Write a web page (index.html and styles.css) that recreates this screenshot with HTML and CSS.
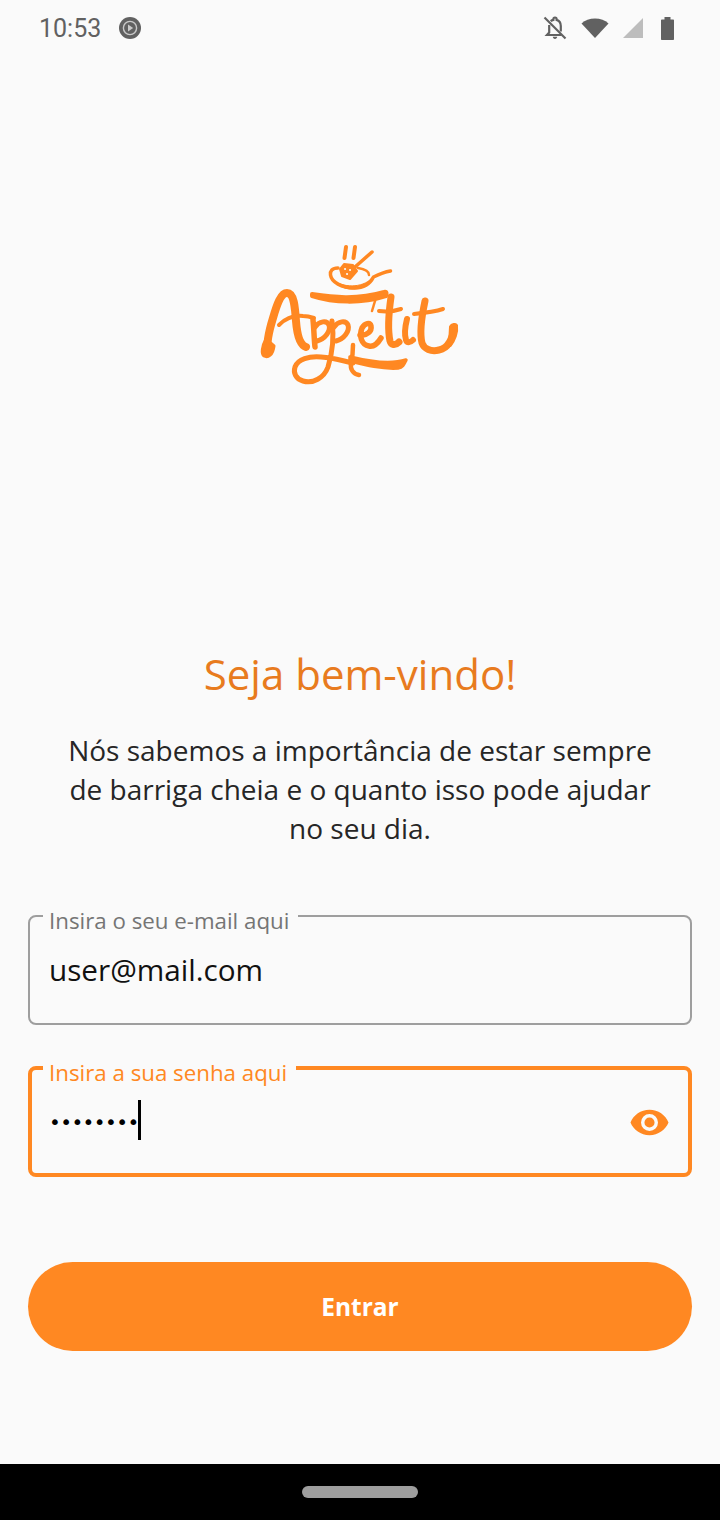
FILE: index.html
```html
<!DOCTYPE html>
<html lang="pt-BR">
<head>
    <meta charset="UTF-8">
    <meta name="viewport" content="width=device-width, initial-scale=1.0">
    <title>Appetit - Login</title>
    <link rel="stylesheet" href="styles.css">
</head>
<body>
    <div class="phone">
        <div class="status-bar">
            <div class="status-left">
                <span class="clock">10:53</span>
                <svg class="play-icon" width="22" height="22" viewBox="0 0 22 22">
                    <circle cx="11" cy="11" r="11" fill="#616161"/>
                    <circle cx="11" cy="11" r="6.6" fill="none" stroke="#c9c9c9" stroke-width="1.4"/>
                    <path d="M9 7.6v6.8l5.2-3.4z" fill="#c9c9c9"/>
                </svg>
            </div>
            <div class="status-right">
                <svg class="bell-icon" width="24" height="26" viewBox="0 0 24 26">
                    <path d="M17.800 16.500V11c0-3-1.900-5.400-4.200-6.100v-.8c0-.9-.7-1.600-1.600-1.600s-1.600.7-1.600 1.600v.8C9 5.200 8.300 5.600 7.700 6.100" fill="none" stroke="#616161" stroke-width="2.200"/>
                    <path d="M6.200 10v7.600L4 20h14.500" fill="none" stroke="#616161" stroke-width="2.200"/>
                    <path d="M9.800 21.800h4.400c0 1.200-1 2.200-2.200 2.200s-2.200-1-2.200-2.200z" fill="#616161"/>
                    <path d="M1.500 2.500l21 21" stroke="#616161" stroke-width="2.200"/>
                </svg>
                <svg class="wifi-icon" width="28" height="20" viewBox="0 0 28 20">
                    <path d="M0.500 5.500C4 2.300 8.700 0.500 14 0.500s10 1.800 13.500 5L14 20z" fill="#616161"/>
                </svg>
                <svg class="signal-icon" width="20" height="20" viewBox="0 0 20 20">
                    <path d="M0 20L20 0v20z" fill="#bdbdbd"/>
                </svg>
                <svg class="battery-icon" width="13" height="23" viewBox="0 0 13 23">
                    <path d="M3.500 0h6v2.500H12c.6 0 1 .4 1 1V22c0 .6-.4 1-1 1H1c-.6 0-1-.4-1-1V3.500c0-.6.4-1 1-1h2.500z" fill="#616161"/>
                </svg>
            </div>
        </div>

        <main class="content">
            <div class="logo">
                <svg width="220" height="160" viewBox="0 0 220 160" fill="none" stroke="#ff8822" stroke-linecap="round" stroke-linejoin="round" role="img" aria-label="Appetit">
                    <!-- steam and spatula -->
                    <path d="M96 12l-1.500 11M105 12l-1.500 11" stroke-width="4"/>
                    <path d="M122 17l-17 15" stroke-width="3.500"/>
                    <path d="M94 29l9 1 4 6-7 8-8-3-2-7z" fill="#ff8822" stroke-width="2"/>
                    <path d="M95 34h.1M100 35h.1M97 39h.1" stroke="#fafafa" stroke-width="2"/>
                    <!-- pan -->
                    <path d="M88 33c-6 0-8 3-7.500 7 1 7 11 13 24 13 10 0 16-5 19-11 6-3 11-5 17-6" stroke-width="3.500"/>
                    <path d="M84 46c8 6 28 8 38-3-4 9-13 11-20 11-7 0-14-3-18-8z" fill="#ff8822" stroke-width="1"/>
                    <path d="M108 33c7 1 11 3 11 7" stroke-width="2.500"/>
                    <!-- bar under the pan -->
                    <path d="M62 59c20 3 45 6 72-2 3-1 3 2 2 4-25 8-52 7-74 0z" fill="#ff8822" stroke-width="4"/>
                    <!-- A -->
                    <path d="M18 116c-2-8 1-20 5-33 4-14 8-25 14-25 7 0 8 14 9 28 1 13 4 24 10 26" stroke-width="8"/>
                    <path d="M16 104c-4 7-5 15-2 17 4 2 9-1 10-10z" fill="#ff8822" stroke-width="3"/>
                    <path d="M29 90c6-6 14-10 24-9 5 0 8 1 11 2" stroke-width="4"/>
                    <!-- p p with descenders -->
                    <path d="M63 85c1 9 1 18 2 27" stroke-width="5.500"/>
                    <path d="M65 92c4-6 12-7 14-2 2 6-4 14-12 16" stroke-width="5"/>
                    <path d="M82 86c2 15 1 30-4 46-4 11-15 17-25 14-7-2-10-8-8-14 3-8 14-11 26-10 14 1 22 4 32 6" stroke-width="5"/>
                    <path d="M84 92c4-6 12-7 14-2 2 6-4 14-12 16" stroke-width="5"/>
                    <path d="M103 110c0 8-1 14-2 18-1 6 2 11 8 12" stroke-width="4.500"/>
                    <!-- swash -->
                    <path d="M100 126c16 4 32 8 48 7 5-1 6-4 8-8-12 4-32 3-56-3z" fill="#ff8822" stroke-width="3.500"/>
                    <!-- e -->
                    <path d="M110 100c7 1 12-4 11-9-1-4-6-3-9 2-3 7-1 17 7 18 5 1 9-3 12-8" stroke-width="5.500"/>
                    <path d="M125 66l-3 10" stroke-width="2.500"/>
                    <!-- t i t -->
                    <path d="M141 62c-2 14-4 30-1 44 1 4 5 5 9 1" stroke-width="7"/>
                    <path d="M129 76c8 1 16 0 22-2" stroke-width="4"/>
                    <path d="M157 84c-2 8-3 15-1 21 1 3 4 3 7 0" stroke-width="6"/>
                    <path d="M175 66c-3 14-6 30-3 42 2 6 9 9 17 7 10-2 13-12 15-21" stroke-width="7"/>
                    <path d="M164 79c10-1 20-2 29-5" stroke-width="4"/>
                    <path d="M201 92c1-2 5-3 5-1 1 6-2 14-6 19z" fill="#ff8822" stroke-width="4"/>
                </svg>
            </div>

            <h1 class="title">Seja bem-vindo!</h1>
            <p class="intro">Nós sabemos a importância de estar sempre de barriga cheia e o quanto isso pode ajudar no seu dia.</p>

            <form class="login-form">
                <div class="field">
                    <label class="field-label">Insira o seu e-mail aqui</label>
                    <span class="field-value">user@mail.com</span>
                </div>

                <div class="field field-focused">
                    <label class="field-label">Insira a sua senha aqui</label>
                    <span class="password-dots">••••••••</span><span class="caret"></span>
                    <svg class="eye-icon" width="39" height="27" viewBox="0 0 40 27">
                        <path fill-rule="evenodd" d="M20 0.500C11 0.500 3.600 5.900 0.500 13.500 3.600 21.100 11 26.500 20 26.500s16.400-5.400 19.500-13C36.400 5.900 29 0.500 20 0.500zM20 4.800a8.700 8.700 0 1 1 0 17.400 8.700 8.700 0 0 1 0-17.400zM20 8.300a5.200 5.200 0 1 0 0 10.400 5.200 5.200 0 0 0 0-10.400z" fill="#ff8822"/>
                    </svg>
                </div>

                <button type="button" class="submit-btn">Entrar</button>
            </form>
        </main>

        <div class="nav-bar">
            <div class="home-pill"></div>
        </div>
    </div>
</body>
</html>
```

FILE: styles.css
```css
* {
    box-sizing: border-box;
}
body {
    margin: 0;
    background-color: #fafafa;
    font-family: "Open Sans", sans-serif;
}
.phone {
    display: flex;
    flex-direction: column;
    height: 1520px;
}
.status-bar {
    display: flex;
    justify-content: space-between;
    align-items: center;
    height: 56px;
    padding: 0 46px 0 39px;
    color: #616161;
}
.status-left {
    display: flex;
    align-items: center;
    gap: 18px;
}
.clock {
    font-family: Roboto, sans-serif;
    font-size: 25px;
}
.status-right {
    display: flex;
    align-items: center;
    gap: 14px;
}
.signal-icon {
    margin-right: 4px;
}
.content {
    flex: 1;
    padding: 179px 28px 0;
}
.logo {
    display: flex;
    justify-content: center;
    height: 160px;
}
.title {
    margin: 251px 0 0;
    font-size: 42px;
    font-weight: 400;
    line-height: 56px;
    color: #e87b1e;
    text-align: center;
}
.intro {
    margin: 29px 28px 0;
    font-size: 28px;
    line-height: 39px;
    color: #262626;
    text-align: center;
}
.login-form {
    margin-top: 67px;
}
.field {
    position: relative;
    display: flex;
    align-items: center;
    height: 110px;
    margin-bottom: 41px;
    padding: 0 19px 2px;
    border: 2px solid #9e9e9e;
    border-radius: 8px;
}
.field-label {
    position: absolute;
    top: -11px;
    left: 13px;
    padding: 0 9px 0 6px;
    background-color: #fafafa;
    font-size: 22.3px;
    line-height: 30px;
    color: #757575;
}
.field-value {
    font-size: 29.7px;
    color: #111;
}
.field-focused {
    height: 111px;
    padding: 0 19px 0 18px;
    border: 4px solid #ff8822;
}
.field-focused .field-label {
    top: -12px;
    left: 11px;
    color: #ff8822;
}
.password-dots {
    margin-left: -1px;
    font-family: "DejaVu Sans", sans-serif;
    font-size: 20px;
    letter-spacing: -0.6px;
    color: #000;
}
.caret {
    width: 3px;
    height: 40px;
    margin: 0 0 4px -1px;
    background-color: #000;
}
.eye-icon {
    margin: 1px 0 0 auto;
}
.submit-btn {
    display: block;
    width: 100%;
    height: 89px;
    margin-top: 85px;
    border: none;
    border-radius: 45px;
    background-color: #ff8822;
    font-family: "Open Sans", sans-serif;
    font-size: 24.5px;
    font-weight: 700;
    color: #fff;
}
.nav-bar {
    display: flex;
    justify-content: center;
    align-items: center;
    height: 56px;
    background-color: #000;
}
.home-pill {
    width: 116px;
    height: 12px;
    border-radius: 6px;
    background-color: #9e9e9e;
}
```
